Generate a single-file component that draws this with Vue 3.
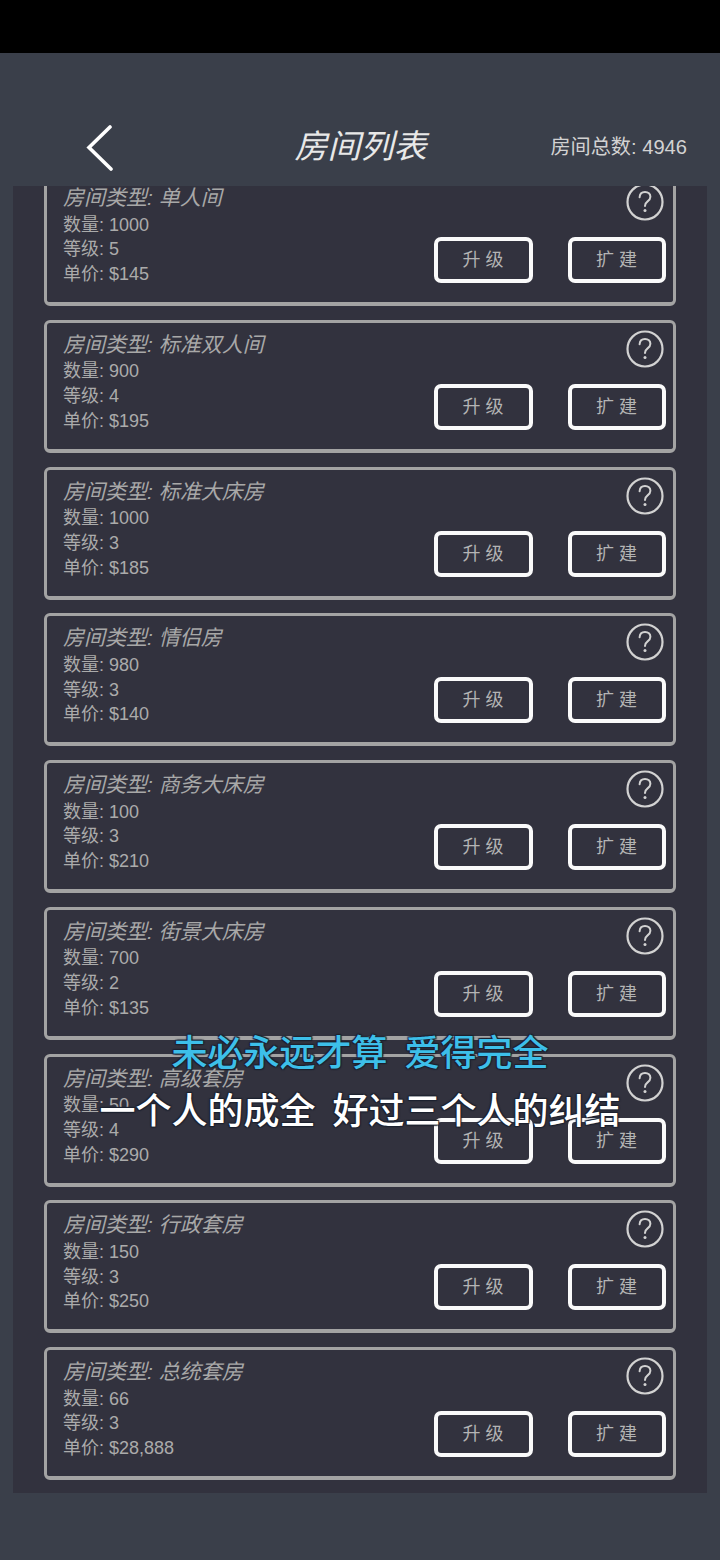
<script setup>
const rooms = [
  { type: '单人间', count: '1000', level: 5, price: '$145' },
  { type: '标准双人间', count: '900', level: 4, price: '$195' },
  { type: '标准大床房', count: '1000', level: 3, price: '$185' },
  { type: '情侣房', count: '980', level: 3, price: '$140' },
  { type: '商务大床房', count: '100', level: 3, price: '$210' },
  { type: '街景大床房', count: '700', level: 2, price: '$135' },
  { type: '高级套房', count: '50', level: 4, price: '$290' },
  { type: '行政套房', count: '150', level: 3, price: '$250' },
  { type: '总统套房', count: '66', level: 3, price: '$28,888' },
]
</script>

<template>
  <div class="page">
    <div class="status"></div>
    <header class="header">
      <div class="back">
        <svg width="28" height="46" viewBox="0 0 28 46" fill="none">
          <path d="M24 2 L3 22.5 L25 44" stroke="#fff" stroke-width="3.6" stroke-linecap="round" stroke-linejoin="miter" />
        </svg>
      </div>
      <div class="title">房间列表</div>
      <div class="total">房间总数: 4946</div>
    </header>
    <main class="panel">
      <div class="list">
        <section v-for="room in rooms" :key="room.type" class="card">
          <div class="info">
            <div class="type">房间类型: {{ room.type }}</div>
            <div class="line">数量: {{ room.count }}</div>
            <div class="line">等级: {{ room.level }}</div>
            <div class="line">单价: {{ room.price }}</div>
          </div>
          <div class="side">
            <svg class="help" width="38" height="38" viewBox="0 0 38 38" fill="none">
              <circle cx="19" cy="19" r="17.5" stroke="#d2d2d2" stroke-width="2.2" />
              <path d="M13.6 14.2 C13.8 10.8 16 9 19 9 C22.2 9 24.4 11 24.4 13.8 C24.4 16 23.2 17.2 21.6 18.4 C20 19.6 19 20.6 19 23" stroke="#d2d2d2" stroke-width="2" stroke-linecap="round" />
              <circle cx="19" cy="27.6" r="1.5" fill="#d2d2d2" />
            </svg>
            <div class="actions">
              <div class="btn first">升 级</div>
              <div class="btn">扩 建</div>
            </div>
          </div>
        </section>
      </div>
    </main>
    <div class="subs">
      <div class="sub blue">未必永远才算&nbsp;&nbsp;爱得完全</div>
      <div class="sub white">一个人的成全&nbsp;&nbsp;好过三个人的纠结</div>
    </div>
  </div>
</template>

<style scoped>
.page {
  position: relative;
  width: 720px;
  height: 1560px;
  overflow: hidden;
  background: #3a3f4a;
  font-family: "Liberation Sans", "Noto Sans CJK SC", sans-serif;
}
.status {
  height: 53px;
  background: #000;
}
.header {
  box-sizing: border-box;
  height: 133px;
  padding-top: 54px;
  display: grid;
  grid-template-columns: 1fr auto 1fr;
  align-items: center;
}
.back {
  padding: 2px 0 0 86px;
  height: 46px;
}
.title {
  font-size: 33px;
  font-style: italic;
  color: #e8e8e8;
  line-height: 40px;
  margin-left: 1px;
}
.total {
  justify-self: end;
  padding-right: 33px;
  font-size: 20.15px;
  line-height: 24px;
  color: #d2d2d2;
}
.panel {
  width: 694px;
  height: 1307px;
  margin-left: 13px;
  background: #32323e;
  overflow: hidden;
}
.list {
  margin-top: -13px;
  padding: 0 31px;
  display: flex;
  flex-direction: column;
  gap: 13.75px;
}
.card {
  box-sizing: border-box;
  height: 133px;
  border: 3px solid #a3a3a3;
  border-bottom-width: 4px;
  border-radius: 6px;
  padding: 8px 7px 0 16px;
  display: flex;
  justify-content: space-between;
}
.type {
  font-size: 21px;
  font-style: italic;
  line-height: 28.5px;
  color: #a8a8a8;
}
.line {
  font-size: 18px;
  line-height: 24.8px;
  color: #ababab;
}
.side {
  display: flex;
  flex-direction: column;
  align-items: flex-end;
}
.help {
  display: block;
  margin: -1px 2px 0 0;
}
.actions {
  display: flex;
  gap: 35px;
  margin-top: 16px;
}
.btn {
  box-sizing: border-box;
  width: 98px;
  height: 46px;
  border: 4px solid #fafafa;
  border-radius: 7px;
  font-size: 18px;
  line-height: 38px;
  text-align: center;
  color: #b4b4b4;
  text-indent: -1px;
}
.btn.first {
  width: 99px;
}
.subs {
  position: absolute;
  left: 0;
  top: 1021px;
  width: 720px;
  font-family: "Noto Sans CJK SC", sans-serif;
  font-size: 36px;
  font-weight: 500;
  line-height: 58px;
  text-align: center;
  white-space: nowrap;
  word-spacing: 0.5px;
}
.sub {
  height: 58px;
  text-shadow: 1px 1px 1px #1c2230, -1px -1px 1px #1c2230, 1px -1px 1px #1c2230, -1px 1px 1px #1c2230;
}
.sub.blue {
  color: #3dbfe9;
}
.sub.white {
  color: #fff;
}
</style>
